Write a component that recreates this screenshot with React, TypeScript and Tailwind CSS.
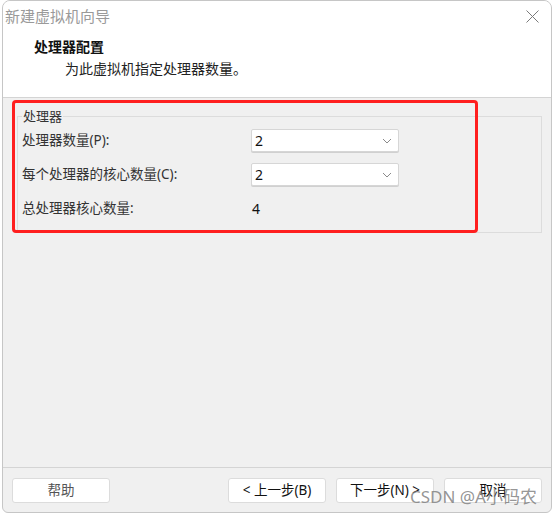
import React from "react";

const FONT = "font-['Noto_Sans','Noto_Sans_CJK_SC',sans-serif]";

function Chevron() {
  return (
    <svg width="10" height="6" viewBox="0 0 10 6" fill="none" className="text-[#8a8a8a]">
      <path d="M1 1l4 4 4-4" stroke="currentColor" strokeWidth="1" />
    </svg>
  );
}

function Select({ value }: { value: string }) {
  return (
    <div className="w-[148px] h-[23px] bg-white border border-[#d6d6d6] rounded-[2px] flex items-center justify-between pl-[3px] pr-[6px] shadow-[0_1px_0_#d0d0d0]">
      <span className="text-[14px] leading-none text-[#111]">{value}</span>
      <Chevron />
    </div>
  );
}

function Row({ label, children }: { label: string; children: React.ReactNode }) {
  return (
    <div className="flex items-center h-[23px]">
      <span className="w-[229px] text-[13.5px] leading-none text-[#333]">{label}</span>
      {children}
    </div>
  );
}

function Button({ children, dim }: { children: React.ReactNode; dim?: boolean }) {
  return (
    <button
      className={`w-[98px] h-[25px] bg-white border border-[#dcdcdc] rounded-[3px] text-[13.5px] leading-none ${
        dim ? "text-[#555]" : "text-[#111]"
      }`}
    >
      {children}
    </button>
  );
}

export default function App() {
  return (
    <div className={`relative w-[554px] h-[516px] bg-white ${FONT}`}>
      <div className="ml-[2px] w-[550px] h-[513px] border border-[#c6c6c6] rounded-t-[8px] rounded-b-[6px] bg-[#f0f0f0] flex flex-col overflow-hidden">
        {/* header */}
        <div className="h-[97px] bg-white border-b border-[#d4d4d4] flex flex-col">
          <div className="h-[30px] flex items-center justify-between pl-[2px] pr-[12px]">
            <span className="text-[15px] leading-none text-[#9a9a9a]">新建虚拟机向导</span>
            <svg width="13" height="13" viewBox="0 0 13 13" className="text-[#7a7a7a]">
              <path d="M0.5 0.5l12 12M12.5 0.5l-12 12" stroke="currentColor" strokeWidth="1" />
            </svg>
          </div>
          <div className="mt-[7px] pl-[31px] text-[14px] leading-[18px] font-bold text-[#111]">处理器配置</div>
          <div className="mt-[4px] pl-[62px] text-[14px] leading-[18px] text-[#222]">为此虚拟机指定处理器数量。</div>
        </div>

        {/* body */}
        <div className="flex-1 pl-[14px] pt-[8px]">
          <fieldset className="w-[525px] border border-[#dcdcdc] pl-[4px] pt-[3px] pb-[12px]">
            <legend className="text-[13px] leading-[20px] text-[#333] px-[1px]">处理器</legend>
            <div className="flex flex-col gap-[11px]">
              <Row label="处理器数量(P):">
                <Select value="2" />
              </Row>
              <Row label="每个处理器的核心数量(C):">
                <Select value="2" />
              </Row>
              <Row label="总处理器核心数量:">
                <span className="pl-[1px] text-[14px] leading-none text-[#111]">4</span>
              </Row>
            </div>
          </fieldset>
        </div>

        {/* footer */}
        <div className="h-[45px] border-t border-[#d4d4d4] flex items-start justify-between pt-[10px] pl-[9px] pr-[9px]">
          <Button dim>帮助</Button>
          <div className="flex gap-[10px]">
            <Button>&lt; 上一步(B)</Button>
            <Button>下一步(N) &gt;</Button>
            <Button>取消</Button>
          </div>
        </div>
      </div>

      {/* annotation highlight */}
      <div className="absolute left-[12px] top-[100px] w-[466px] h-[133px] border-[3px] border-[#ff1f1f] rounded-[4px] pointer-events-none" />

      {/* watermark */}
      <div className="absolute left-[410px] top-[486px] text-[17px] leading-[22px] text-[#7a7a7a]/80 whitespace-nowrap pointer-events-none">
        CSDN @A小码农
      </div>
    </div>
  );
}
